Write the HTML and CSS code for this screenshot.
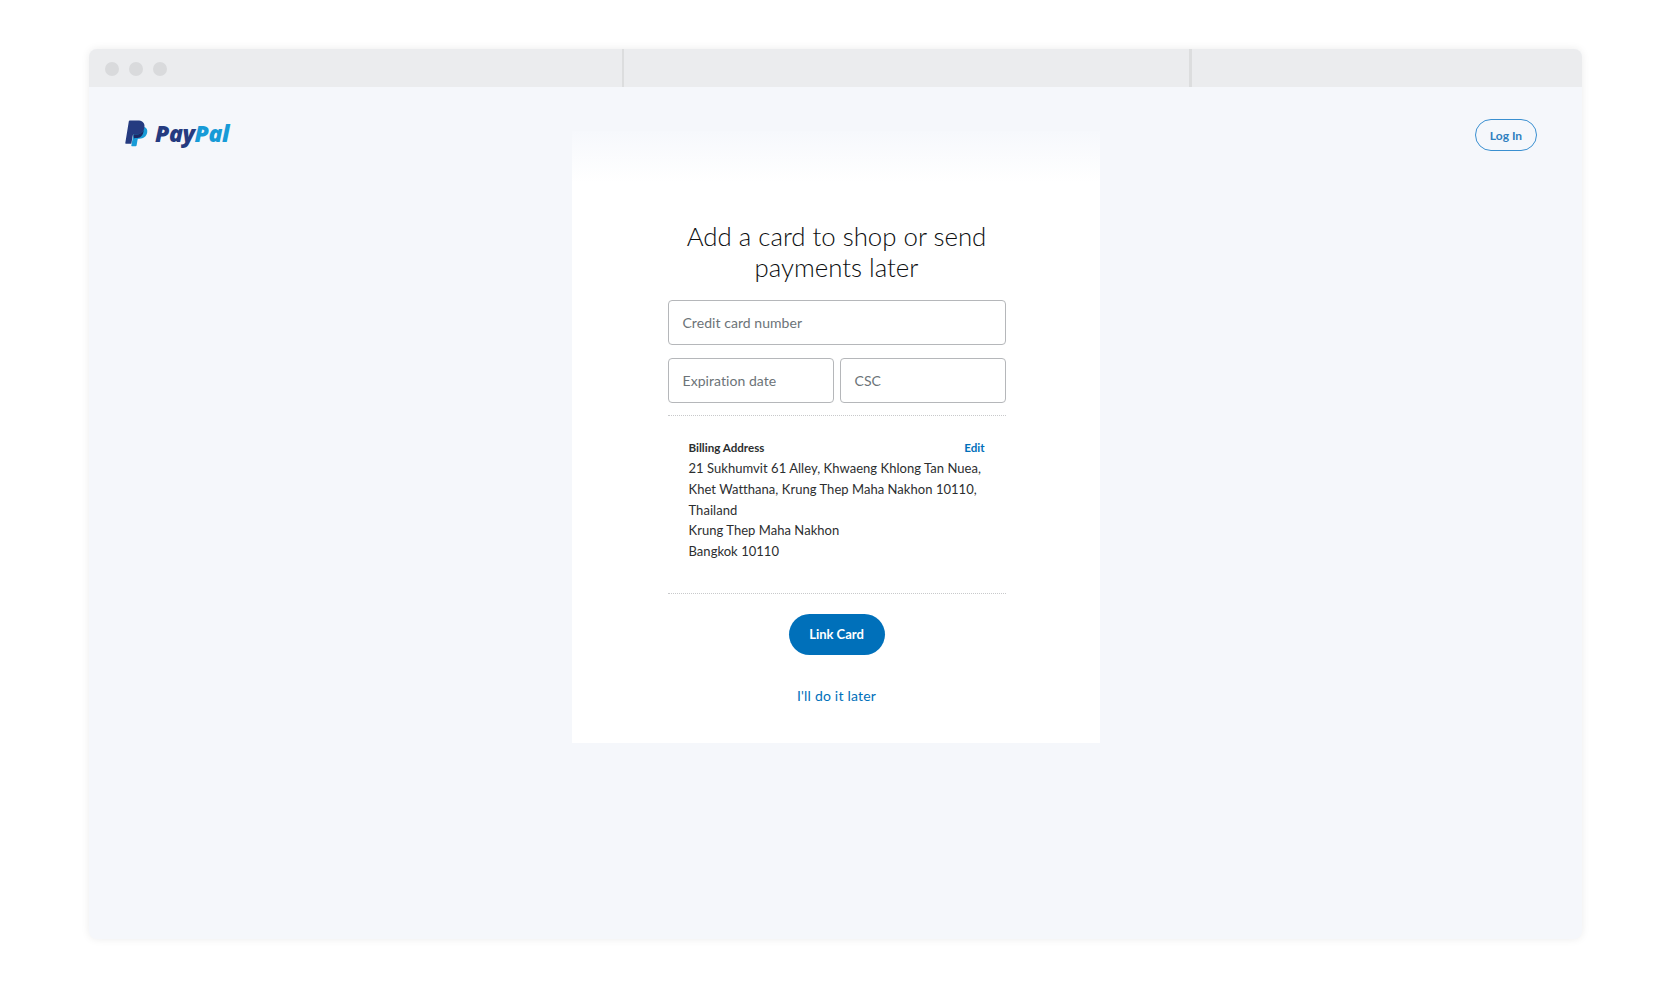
FILE: index.html
```html
<!DOCTYPE html>
<html lang="en">
<head>
<meta charset="utf-8">
<title>Add a card</title>
<link rel="stylesheet" href="styles.css">
</head>
<body>
<div class="window">
  <div class="chrome">
    <div class="dots"><span class="dot"></span><span class="dot"></span><span class="dot"></span></div>
    <span class="tab-line tab-line-a"></span>
    <span class="tab-line tab-line-b"></span>
  </div>
  <div class="page">
    <a class="logo">
      <svg class="mark" viewBox="0 0 24 28" width="23" height="27" aria-hidden="true">
        <path fill="#179bd7" d="M20.6 7.2c1.9 1 3 2.9 2.6 5.6-.7 4.6-4 6.6-8 6.6h-1c-.6 0-1 .4-1.1 1l-1 6c-.1.5-.5.9-1 .9H7.2c-.4 0-.7-.3-.6-.7L9 14z"/>
        <path fill="#253b80" d="M5 .5h8.2c4 0 7.8 1.900 7.100 7-.7 5-4.300 7.500-8.500 7.500H9.200c-.6 0-1 .4-1.100 1L6.700 24.100c-.1.400-.4.700-.8.700H.9c-.4 0-.7-.4-.6-.8L4 1.300C4.100.8 4.500.5 5 .5z"/>
        <path fill="#1b2a66" d="M9.200 15h2.600c3.300 0 6.300-1.600 7.700-4.700.1 2.500-1.100 5.500-3.100 7-1.300 1-3 1.500-5 1.500h-1c-.6 0-.9.300-1 .800L8.800 15.900c.1-.5.200-.9.400-.9z"/>
      </svg>
      <span class="word"><span class="word-pay">Pay</span><span class="word-pal">Pal</span></span>
    </a>
    <main class="card">
      <h1 class="title">Add a card to shop or send payments later</h1>
      <form class="form">
        <div class="field">Credit card number</div>
        <div class="field-row">
          <div class="field">Expiration date</div>
          <div class="field">CSC</div>
        </div>
        <section class="billing">
          <div class="billing-head"><span class="billing-label">Billing Address</span><a class="edit">Edit</a></div>
          <p class="address">21 Sukhumvit 61 Alley, Khwaeng Khlong Tan Nuea,<br>Khet Watthana, Krung Thep Maha Nakhon 10110,<br>Thailand<br>Krung Thep Maha Nakhon<br>Bangkok 10110</p>
        </section>
        <div class="actions">
          <a class="primary">Link Card</a>
          <a class="later">I'll do it later</a>
        </div>
      </form>
    </main>
    <div class="login-wrap"><a class="login">Log In</a></div>
  </div>
</div>
</body>
</html>
```
FILE: styles.css
```css
* { box-sizing: border-box; }
html, body { margin: 0; background: #fff; }
body {
  height: 988px;
  overflow: hidden;
  padding: 49px 88px 0 89px;
  font-family: "Lato", "Noto Sans", sans-serif;
  color: #2c2e2f;
}
.window {
  height: 890px;
  display: flex;
  flex-direction: column;
  border-radius: 8px;
  overflow: hidden;
  box-shadow: 0 0 9px rgba(0,0,0,.08);
  background: #f5f7fb;
}
.chrome {
  height: 38px;
  flex: none;
  background: #ebecee;
  display: flex;
  align-items: center;
  position: relative;
}
.dots { display: flex; gap: 10px; padding: 2px 0 0 16px; }
.dot { width: 14px; height: 14px; border-radius: 50%; background: #d9dadc; }
.tab-line { position: absolute; top: 0; bottom: 0; width: 2px; background: #dcddde; }
.tab-line-a { left: 533px; }
.tab-line-b { left: 1100px; width: 3px; }
.page {
  flex: 1;
  display: grid;
  grid-template-columns: 1fr 528px 1fr;
  align-items: start;
}
.logo { display: flex; align-items: center; gap: 7px; padding: 32px 0 0 36px; }
.mark { flex: none; display: block; }
.word { font: italic 800 23px/28px "Open Sans", sans-serif; letter-spacing: -.4px; }
.word-pay { color: #253b80; }
.word-pal { color: #179bd7; }
.card {
  margin-top: 44px;
  height: 612px;
  background: linear-gradient(#f6f8fc 0, #fff 52px);
  padding: 90px 94px 0 96px;
}
.title {
  margin: 0;
  font-weight: 300;
  font-size: 25.8px;
  line-height: 31px;
  text-align: center;
  color: #0c0e10;
}
.form { margin-top: 17px; }
.field {
  height: 45px;
  flex: 1;
  border: 1px solid #b5b7ba;
  border-radius: 4px;
  padding: 0 14px;
  display: flex;
  align-items: center;
  font-size: 14px;
  letter-spacing: .05px;
  color: #6c7378;
  background: #fff;
}
.field-row { display: flex; gap: 6px; margin-top: 13px; }
.billing {
  margin-top: 12px;
  border-top: 1px dotted #c8c9cb;
  border-bottom: 1px dotted #c8c9cb;
  padding: 21px 21px 31px 21px;
}
.billing-head {
  display: flex;
  justify-content: space-between;
  font-size: 11.6px;
  line-height: 21px;
}
.billing-label { font-weight: 700; color: #2c2e2f; }
.edit { color: #0070ba; font-weight: 700; }
.address {
  margin: 0;
  font-size: 13px;
  line-height: 20.8px;
  letter-spacing: .04px;
  color: #2c2e2f;
  white-space: nowrap;
}
.actions { display: flex; flex-direction: column; align-items: center; }
.primary {
  margin-top: 20px;
  width: 96px;
  height: 41px;
  border-radius: 21px;
  background: #0070ba;
  color: #fff;
  font-weight: 700;
  font-size: 13px;
  display: flex;
  align-items: center;
  justify-content: center;
}
.later {
  margin-top: 31px;
  font-size: 14px;
  line-height: 20px;
  letter-spacing: .2px;
  color: #0070ba;
}
.login-wrap { display: flex; justify-content: flex-end; padding: 32px 45px 0 0; }
.login {
  width: 62px;
  height: 32px;
  border: 1.5px solid #3a8fd0;
  border-radius: 16px;
  display: flex;
  align-items: center;
  justify-content: center;
  font-size: 12px;
  font-weight: 700;
  color: #2f7fc0;
}
```
